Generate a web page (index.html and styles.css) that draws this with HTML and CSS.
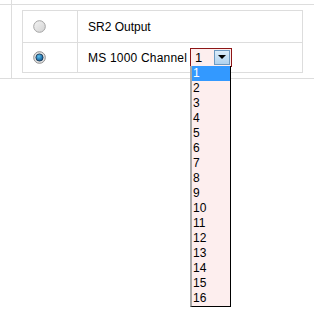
FILE: index.html
```html
<!DOCTYPE html>
<html lang="en">
<head>
    <meta charset="UTF-8">
    <title>Output Select</title>
    <link rel="stylesheet" href="styles.css">
</head>
<body>
    <div class="outer">
        <div class="cell side top"></div>
        <div class="cell top"></div>
        <div class="cell side"></div>
        <div class="cell main">
            <div class="options">
                <!-- SR2 row -->
                <div class="opt-row">
                    <div class="opt-radio">
                        <svg class="radio" width="13" height="13" viewBox="0 0 13 13">
                            <defs>
                                <linearGradient id="rg1" x1="0" y1="0" x2="1" y2="1">
                                    <stop offset="0" stop-color="#f4f4f4"/>
                                    <stop offset="1" stop-color="#d2d2d2"/>
                                </linearGradient>
                            </defs>
                            <circle cx="6.5" cy="6.5" r="5.8" fill="url(#rg1)" stroke="#a4a4a4" stroke-width="1"/>
                        </svg>
                    </div>
                    <div class="opt-label">SR2 Output</div>
                </div>
                <!-- MS 1000 row -->
                <div class="opt-row">
                    <div class="opt-radio">
                        <svg class="radio" width="13" height="13" viewBox="0 0 13 13">
                            <defs>
                                <radialGradient id="rg2" cx="0.4" cy="0.35" r="0.7">
                                    <stop offset="0" stop-color="#5cc0f0"/>
                                    <stop offset="1" stop-color="#0a4f8a"/>
                                </radialGradient>
                            </defs>
                            <circle cx="6.5" cy="6.5" r="5.8" fill="#e4e4e4" stroke="#8c8c8c" stroke-width="1"/>
                            <circle cx="6.5" cy="6.5" r="3.6" fill="url(#rg2)" stroke="#14304a" stroke-width="0.8"/>
                        </svg>
                    </div>
                    <div class="opt-label">
                        <span class="label-text">MS 1000 Channel</span>
                        <div class="select-wrap">
                            <div class="select">
                                <span class="select-value">1</span>
                                <span class="select-btn">
                                    <svg width="8" height="5" viewBox="0 0 8 5"><path d="M0 0h8L4 4z" fill="#000"/></svg>
                                </span>
                            </div>
                            <div class="select-list">
                                <div class="item active">1</div>
                                <div class="item">2</div>
                                <div class="item">3</div>
                                <div class="item">4</div>
                                <div class="item">5</div>
                                <div class="item">6</div>
                                <div class="item">7</div>
                                <div class="item">8</div>
                                <div class="item">9</div>
                                <div class="item">10</div>
                                <div class="item">11</div>
                                <div class="item">12</div>
                                <div class="item">13</div>
                                <div class="item">14</div>
                                <div class="item">15</div>
                                <div class="item">16</div>
                            </div>
                        </div>
                    </div>
                </div>
            </div>
        </div>
    </div>
</body>
</html>
```

FILE: styles.css
```css
:root {
    --line: #dddddd;
    --select-border: #8e1616;
    --select-bg: #fdeeee;
    --highlight: #3399ff;
}

* {
    box-sizing: border-box;
    margin: 0;
    padding: 0;
}

html, body {
    min-height: 319px;
}

body {
    background: #fff;
    color: #000;
    font-family: "Liberation Sans", Arial, sans-serif;
    font-size: 12px;
}

.outer {
    display: grid;
    grid-template-columns: 12px 1fr;
    grid-template-rows: 5px 74px;
}

.cell {
    border-bottom: 1px solid var(--line);
}

.side {
    border-right: 1px solid var(--line);
}

.main {
    padding: 5px 11px 0 10px;
}

.options {
    border: 1px solid var(--line);
    width: 281px;
}

.opt-row {
    display: flex;
    height: 31px;
}

.opt-row + .opt-row {
    border-top: 1px solid var(--line);
    height: 30px;
}

.opt-radio {
    width: 55px;
    border-right: 1px solid var(--line);
    display: flex;
    align-items: center;
    padding-left: 10px;
}

.opt-label {
    flex: 1;
    display: flex;
    align-items: center;
    padding-left: 10px;
    white-space: nowrap;
}

.label-text {
    letter-spacing: 0.2px;
}

.select-wrap {
    position: relative;
    margin-left: 3px;
}

.select {
    width: 42px;
    height: 19px;
    border: 1px solid var(--select-border);
    background: var(--select-bg);
    display: flex;
    align-items: center;
    font-size: 13px;
}

.select-value {
    flex: 1;
    padding-left: 4px;
}

.select-btn {
    width: 16px;
    height: 15px;
    margin-right: 1px;
    border: 1px solid #6d9ac2;
    background: linear-gradient(#dcecf9, #aed2ef);
    display: flex;
    align-items: center;
    justify-content: center;
}

.select-list {
    position: absolute;
    top: 18px;
    left: 0;
    width: 41px;
    z-index: 5;
    background: var(--select-bg);
    border-left: 2px solid #a8a8a8;
    border-right: 1px solid #000;
    border-bottom: 1px solid #000;
    font-size: 12px;
}

.item {
    height: 15px;
    line-height: 15px;
    padding-left: 1px;
}

.item.active {
    background: var(--highlight);
    color: #fff;
}
```
